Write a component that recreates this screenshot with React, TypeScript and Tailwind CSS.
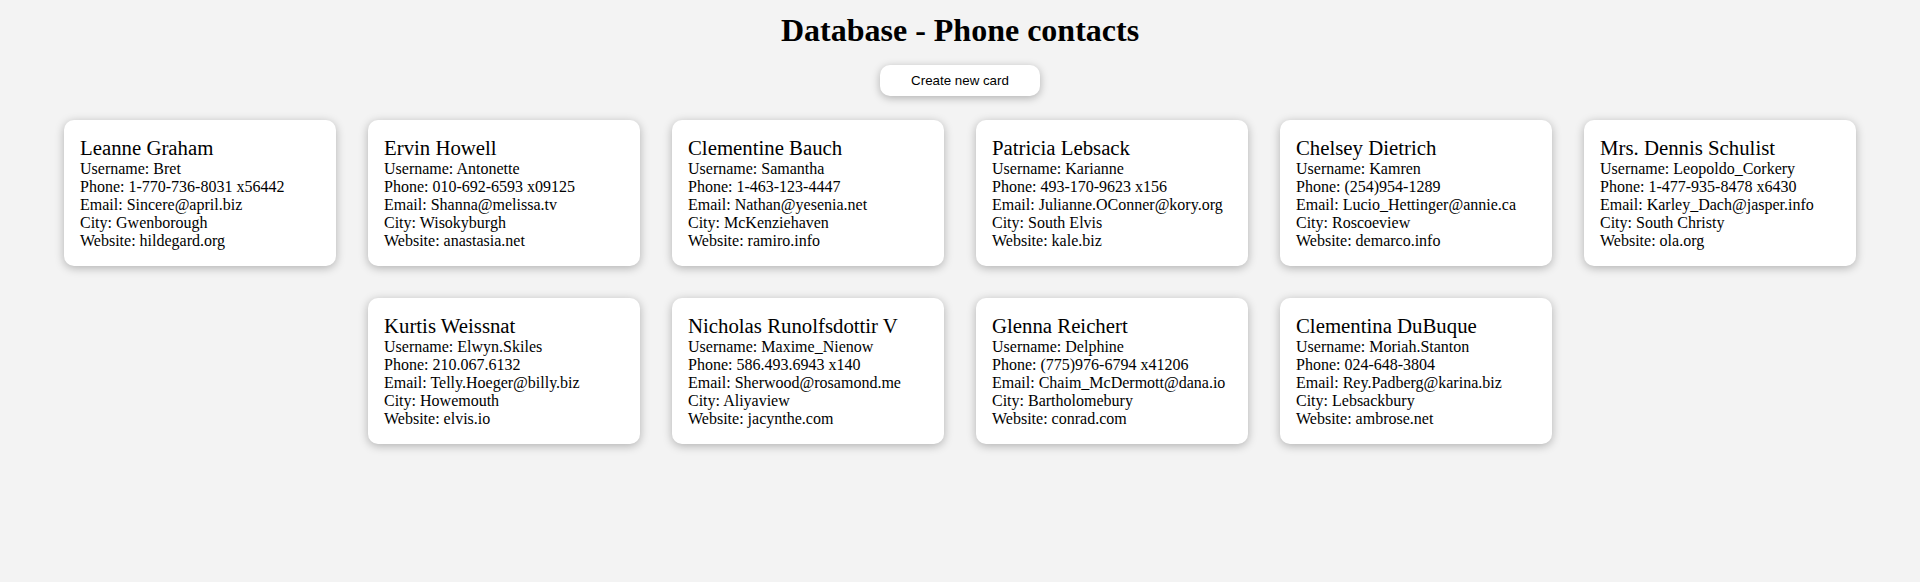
const contacts = [
  { name: "Leanne Graham", username: "Bret", phone: "1-770-736-8031 x56442", email: "Sincere@april.biz", city: "Gwenborough", website: "hildegard.org" },
  { name: "Ervin Howell", username: "Antonette", phone: "010-692-6593 x09125", email: "Shanna@melissa.tv", city: "Wisokyburgh", website: "anastasia.net" },
  { name: "Clementine Bauch", username: "Samantha", phone: "1-463-123-4447", email: "Nathan@yesenia.net", city: "McKenziehaven", website: "ramiro.info" },
  { name: "Patricia Lebsack", username: "Karianne", phone: "493-170-9623 x156", email: "Julianne.OConner@kory.org", city: "South Elvis", website: "kale.biz" },
  { name: "Chelsey Dietrich", username: "Kamren", phone: "(254)954-1289", email: "Lucio_Hettinger@annie.ca", city: "Roscoeview", website: "demarco.info" },
  { name: "Mrs. Dennis Schulist", username: "Leopoldo_Corkery", phone: "1-477-935-8478 x6430", email: "Karley_Dach@jasper.info", city: "South Christy", website: "ola.org" },
  { name: "Kurtis Weissnat", username: "Elwyn.Skiles", phone: "210.067.6132", email: "Telly.Hoeger@billy.biz", city: "Howemouth", website: "elvis.io" },
  { name: "Nicholas Runolfsdottir V", username: "Maxime_Nienow", phone: "586.493.6943 x140", email: "Sherwood@rosamond.me", city: "Aliyaview", website: "jacynthe.com" },
  { name: "Glenna Reichert", username: "Delphine", phone: "(775)976-6794 x41206", email: "Chaim_McDermott@dana.io", city: "Bartholomebury", website: "conrad.com" },
  { name: "Clementina DuBuque", username: "Moriah.Stanton", phone: "024-648-3804", email: "Rey.Padberg@karina.biz", city: "Lebsackbury", website: "ambrose.net" },
];

type Contact = (typeof contacts)[number];

function ContactCard({ contact }: { contact: Contact }) {
  return (
    <div className="w-[272px] p-4 rounded-[10px] bg-white shadow-[0_2px_10px_rgba(0,0,0,0.28)] text-black">
      <h3 className="text-[20.8px] leading-[24px]">{contact.name}</h3>
      <div className="text-base leading-[18px]">
        <p>Username: {contact.username}</p>
        <p>Phone: {contact.phone}</p>
        <p>Email: {contact.email}</p>
        <p>City: {contact.city}</p>
        <p>Website: {contact.website}</p>
      </div>
    </div>
  );
}

export default function App() {
  return (
    <div className="min-h-[582px] bg-[#f3f3f3] font-['Liberation_Serif','Times_New_Roman',serif] flex flex-col items-center">
      <h1 className="mt-3 text-[32px] font-bold leading-[normal] text-black">Database - Phone contacts</h1>
      <button className="mt-4 w-[160px] h-[31px] rounded-[10px] bg-white shadow-[0_2px_8px_rgba(0,0,0,0.28)] font-['Liberation_Sans',Arial,sans-serif] text-[13.33px] text-black">
        Create new card
      </button>
      {/* Карточки контактов */}
      <div className="mt-6 w-full flex flex-wrap justify-center gap-8">
        {contacts.map((c) => (
          <ContactCard key={c.username} contact={c} />
        ))}
      </div>
    </div>
  );
}
